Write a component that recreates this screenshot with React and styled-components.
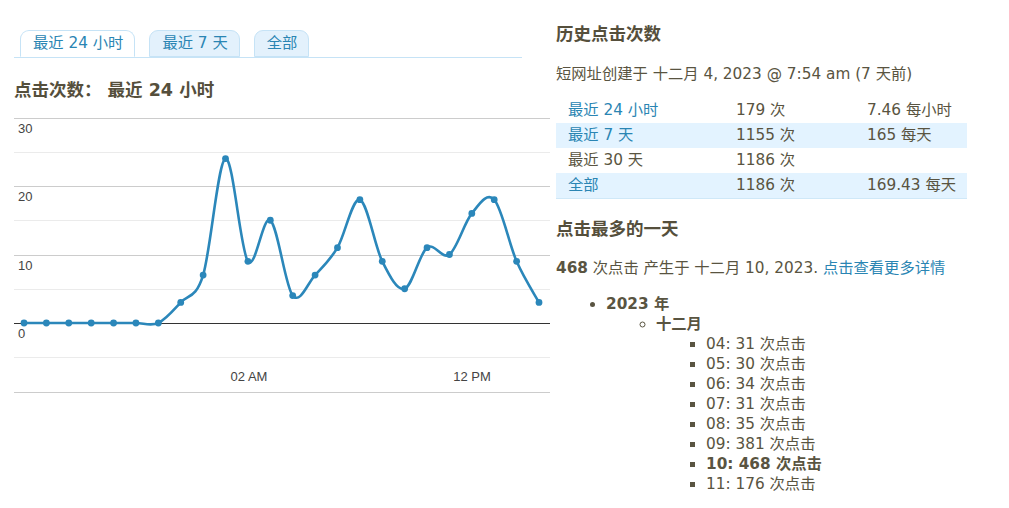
import React from "react";
import styled, { createGlobalStyle } from "styled-components";

const Global = createGlobalStyle`
  html, body { margin: 0; padding: 0; background: #fff; }
  body {
    font-family: "DejaVu Sans", Verdana, "Noto Sans CJK SC", sans-serif;
    font-size: 15.3px;
    color: #595441;
  }
`;

const Page = styled.div`
  display: flex;
  align-items: flex-start;
  padding-left: 14px;
  gap: 6px;
`;

const LeftCol = styled.div`
  width: 536px;
  padding-top: 30px;
`;

const Tabs = styled.ul`
  list-style: none;
  margin: 0;
  padding: 0 0 0 6px;
  width: 502px;
  display: flex;
  gap: 14px;
  border-bottom: 1px solid #c6e3f6;
  height: 27px;
`;

const Tab = styled.li`
  height: 27px;
  box-sizing: border-box;
  margin-bottom: -1px;
  border: 1px solid #c6e3f6;
  border-bottom: ${(p) => (p.$active ? "1px solid #fff" : "1px solid #c6e3f6")};
  border-radius: 9px 9px 0 0;
  background: ${(p) => (p.$active ? "#fff" : "#e3f1fc")};
  padding: 0 11px 0 12px;
  display: flex;
  align-items: center;
`;

const TabLink = styled.a`
  color: #2a85b3;
  text-decoration: none;
  line-height: 25px;
  white-space: nowrap;
`;

const Heading = styled.h2`
  margin: 0;
  font-size: 17.5px;
  font-weight: bold;
  line-height: 24px;
  color: #554f3c;
  white-space: nowrap;
`;

const ChartTitle = styled(Heading)`
  margin-top: 20px;
`;

const ChartSvg = styled.svg`
  display: block;
  margin-top: 9px;
`;

const RightCol = styled.div`
  width: 420px;
  padding-top: 22px;
`;

const Para = styled.p`
  margin: ${(p) => p.$m || "18px 0 0"};
  line-height: 20px;
  white-space: nowrap;
`;

const Link = styled.a`
  color: #2a85b3;
  text-decoration: none;
`;

const StatsTable = styled.table`
  margin-top: 14px;
  width: 411px;
  border-collapse: collapse;
  font-size: 15.3px;
`;

const Row = styled.tr`
  background: ${(p) => (p.$alt ? "#e3f3ff" : "transparent")};
  border-bottom: ${(p) => (p.$last ? "1px solid #cfe8f8" : "none")};
`;

const Cell = styled.td`
  height: 25px;
  padding: 0 0 0 12px;
  width: ${(p) => p.$w}px;
  white-space: nowrap;
  box-sizing: border-box;
  line-height: 25px;
  vertical-align: middle;
`;

const SecondHeading = styled(Heading)`
  margin-top: 18px;
`;

const List = styled.ul`
  margin: ${(p) => p.$m || "0"};
  padding-left: ${(p) => p.$pl || 50}px;
  list-style-type: ${(p) => p.$type};
  line-height: 20px;
`;

const Item = styled.li`
  font-weight: ${(p) => (p.$bold ? "bold" : "normal")};
  white-space: nowrap;
`;

const values = [0, 0, 0, 0, 0, 0, 0, 3, 7, 24, 9, 15, 4, 7, 11, 18, 9, 5, 11, 10, 16, 18, 9, 3];

function Chart() {
  const W = 536;
  const H = 290;
  const x0 = 10;
  const dx = (525 - 10) / 23;
  const yOf = (v) => 212 - v * 6.85;
  const pts = values.map((v, i) => [x0 + i * dx, yOf(v)]);
  let d = `M${pts[0][0]},${pts[0][1]}`;
  for (let i = 0; i < pts.length - 1; i++) {
    const p0 = pts[i - 1] || pts[i];
    const p1 = pts[i];
    const p2 = pts[i + 1];
    const p3 = pts[i + 2] || p2;
    const c1x = p1[0] + (p2[0] - p0[0]) / 6;
    const c1y = p1[1] + (p2[1] - p0[1]) / 6;
    const c2x = p2[0] - (p3[0] - p1[0]) / 6;
    const c2y = p2[1] - (p3[1] - p1[1]) / 6;
    d += ` C${c1x.toFixed(2)},${c1y.toFixed(2)} ${c2x.toFixed(2)},${c2y.toFixed(2)} ${p2[0].toFixed(2)},${p2[1].toFixed(2)}`;
  }
  const grid = [30, 25, 20, 15, 10, 5, -5, -10];
  return (
    <ChartSvg width={W} height={H} viewBox={`0 0 ${W} ${H}`}>
      {grid.map((g) => (
        <rect
          key={g}
          x={0}
          y={Math.round(yOf(g))}
          width={W}
          height={1}
          fill={g % 10 === 0 ? "#cccccc" : "#ebebeb"}
        />
      ))}
      <rect x={0} y={Math.round(yOf(0))} width={W} height={1} fill="#333333" />
      {[30, 20, 10, 0].map((g) => (
        <text
          key={g}
          x={4}
          y={yOf(g) + 15}
          fontFamily="'Liberation Sans', Arial, sans-serif"
          fontSize="13"
          fill="#444444"
        >
          {g}
        </text>
      ))}
      <text x={235} y={270} textAnchor="middle" fontFamily="'Liberation Sans', Arial, sans-serif" fontSize="13" fill="#444444">
        02 AM
      </text>
      <text x={458} y={270} textAnchor="middle" fontFamily="'Liberation Sans', Arial, sans-serif" fontSize="13" fill="#444444">
        12 PM
      </text>
      <path d={d} fill="none" stroke="#2b87ba" strokeWidth="2.6" strokeLinejoin="round" />
      {pts.map((p, i) => (
        <circle key={i} cx={p[0]} cy={p[1]} r={3.4} fill="#2b87ba" />
      ))}
    </ChartSvg>
  );
}

export default function App() {
  return (
    <>
      <Global />
      <Page>
        <LeftCol>
          <Tabs>
            <Tab $active>
              <TabLink href="#">最近 24 小时</TabLink>
            </Tab>
            <Tab>
              <TabLink href="#">最近 7 天</TabLink>
            </Tab>
            <Tab>
              <TabLink href="#">全部</TabLink>
            </Tab>
          </Tabs>
          <ChartTitle>点击次数： 最近 24 小时</ChartTitle>
          <Chart />
        </LeftCol>
        <RightCol>
          <Heading>历史点击次数</Heading>
          <Para>短网址创建于 十二月 4, 2023 @ 7:54 am (7 天前)</Para>
          <StatsTable>
            <tbody>
              <Row>
                <Cell $w={168}><Link href="#">最近 24 小时</Link></Cell>
                <Cell $w={131}>179 次</Cell>
                <Cell $w={112}>7.46 每小时</Cell>
              </Row>
              <Row $alt>
                <Cell $w={168}><Link href="#">最近 7 天</Link></Cell>
                <Cell $w={131}>1155 次</Cell>
                <Cell $w={112}>165 每天</Cell>
              </Row>
              <Row>
                <Cell $w={168}>最近 30 天</Cell>
                <Cell $w={131}>1186 次</Cell>
                <Cell $w={112}></Cell>
              </Row>
              <Row $alt $last>
                <Cell $w={168}><Link href="#">全部</Link></Cell>
                <Cell $w={131}>1186 次</Cell>
                <Cell $w={112}>169.43 每天</Cell>
              </Row>
            </tbody>
          </StatsTable>
          <SecondHeading>点击最多的一天</SecondHeading>
          <Para $m="17px 0 0">
            <b>468</b> 次点击 产生于 十二月 10, 2023. <Link href="#">点击查看更多详情</Link>
          </Para>
          <List $type="disc" $m="16px 0 0">
            <Item $bold>
              2023 年
              <List $type="circle">
                <Item $bold>
                  十二月
                  <List $type="square">
                    <Item>04: 31 次点击</Item>
                    <Item>05: 30 次点击</Item>
                    <Item>06: 34 次点击</Item>
                    <Item>07: 31 次点击</Item>
                    <Item>08: 35 次点击</Item>
                    <Item>09: 381 次点击</Item>
                    <Item $bold>10: 468 次点击</Item>
                    <Item>11: 176 次点击</Item>
                  </List>
                </Item>
              </List>
            </Item>
          </List>
        </RightCol>
      </Page>
    </>
  );
}
